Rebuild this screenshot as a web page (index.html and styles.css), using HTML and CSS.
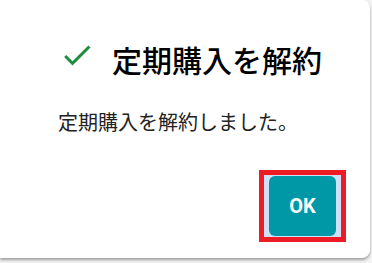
FILE: index.html
```html
<!DOCTYPE html>
<html lang="ja">
<head>
    <meta charset="UTF-8">
    <meta name="viewport" content="width=device-width, initial-scale=1.0">
    <title>定期購入を解約</title>
    <link rel="stylesheet" href="styles.css">
</head>
<body>
    <div class="dialog">
        <div class="dialog-title">
            <svg class="check-icon" viewBox="0 0 24 24" width="36" height="36">
                <path d="M9 16.17L4.83 12l-1.42 1.41L9 19 21 7l-1.41-1.41z" fill="#1e8e3e"/>
            </svg>
            <h2>定期購入を解約</h2>
        </div>

        <p class="message">定期購入を解約しました。</p>

        <div class="actions">
            <div class="focus-frame">
                <button class="ok-button">OK</button>
            </div>
        </div>
    </div>
</body>
</html>
```

FILE: styles.css
```css
body {
    margin: 0;
    width: 372px;
    height: 263px;
    background-color: #f3f3f3;
    font-family: "Noto Sans CJK JP", "Noto Sans", sans-serif;
    overflow: hidden;
}

.dialog {
    width: 370px;
    height: 258px;
    box-sizing: border-box;
    padding: 37px 24px 16px 58px;
    background: white;
    border-radius: 0 8px 8px 0;
    box-shadow: 0 2px 3px rgba(0,0,0,0.35);
}

.dialog-title {
    display: flex;
    align-items: flex-start;
    margin-left: 1px;
}

.check-icon {
    flex-shrink: 0;
    display: block;
}

h2 {
    margin: 4px 0 0 17px;
    font-size: 30px;
    line-height: 36px;
    font-weight: 500;
    color: #000;
}

.message {
    margin: 31px 0 0 0;
    font-size: 20px;
    line-height: 28px;
    color: #222;
}

.actions {
    display: flex;
    justify-content: flex-end;
    margin-top: 34px;
}

.focus-frame {
    border: 5px solid #ed1c24;
    padding: 1px 5px;
    background: #cfe0f8;
}

.ok-button {
    display: block;
    width: 67px;
    height: 60px;
    padding: 0;
    font-family: Roboto, "Liberation Sans", sans-serif;
    font-size: 20px;
    font-weight: 700;
    background: #0097a7;
    color: white;
    border: none;
    border-radius: 6px;
    cursor: pointer;
}

.ok-button:hover {
    background: #00899a;
}
```
